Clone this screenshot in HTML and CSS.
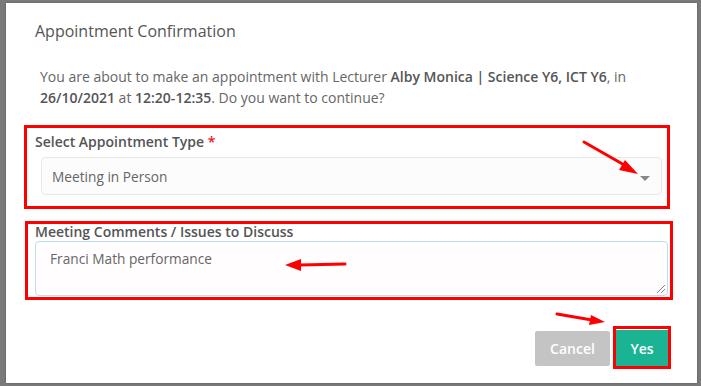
FILE: index.html
```html
<!DOCTYPE html>
<html lang="en">
<head>
    <meta charset="UTF-8">
    <meta name="viewport" content="width=device-width, initial-scale=1.0">
    <title>Appointment Confirmation</title>
    <link rel="stylesheet" href="styles.css">
</head>
<body>
    <div class="backdrop">
        <div class="modal">
            <h2 class="modal-title">Appointment Confirmation</h2>
            <p class="modal-text">You are about to make an appointment with Lecturer <strong>Alby Monica | Science Y6, ICT Y6</strong>, in <strong>26/10/2021</strong> at <strong>12:20-12:35</strong>. Do you want to continue?</p>

            <div class="mark mark-type">
                <label class="field-label">Select Appointment Type <span class="required">*</span></label>
                <div class="select-box">
                    <span>Meeting in Person</span>
                    <span class="caret"></span>
                </div>
            </div>

            <div class="mark mark-comments">
                <label class="field-label">Meeting Comments / Issues to Discuss</label>
                <div class="text-box">
                    <span>Franci Math performance</span>
                    <span class="grip"></span>
                </div>
            </div>

            <div class="modal-footer">
                <button class="btn btn-cancel">Cancel</button>
                <div class="mark-btn">
                    <button class="btn btn-yes">Yes</button>
                </div>
            </div>
        </div>
    </div>

    <svg class="arrows" width="701" height="386" viewBox="0 0 701 386">
        <line x1="584" y1="142" x2="626" y2="166" stroke="#ff0000" stroke-width="3" stroke-linecap="round"/>
        <polygon points="638,174 619,170 625,160" fill="#ff0000"/>
        <line x1="345" y1="264" x2="300" y2="265" stroke="#ff0000" stroke-width="3" stroke-linecap="round"/>
        <polygon points="285,265 301,259 301,271" fill="#ff0000"/>
        <line x1="557" y1="314" x2="592" y2="320" stroke="#ff0000" stroke-width="3" stroke-linecap="round"/>
        <polygon points="605,322 589,325 591,315" fill="#ff0000"/>
    </svg>
</body>
</html>
```

FILE: styles.css
```css
* {
    margin: 0;
    padding: 0;
    box-sizing: border-box;
}

body {
    font-family: 'Open Sans', 'Liberation Sans', sans-serif;
    background-color: #7a7a7a;
    width: 701px;
    height: 386px;
    overflow: hidden;
    position: relative;
}

.backdrop {
    padding: 3px 0 0 6px;
}

.modal {
    width: 691px;
    height: 380px;
    background-color: #ffffff;
    box-shadow: 0 0 2px rgba(0, 0, 0, 0.3);
}

.modal-title {
    padding: 18px 0 0 29px;
    font-size: 16px;
    line-height: 20px;
    font-weight: 400;
    color: #555555;
}

.modal-text {
    margin: 25px 0 0 34px;
    width: 625px;
    font-size: 14px;
    line-height: 21px;
    color: #666666;
}

.modal-text strong {
    font-weight: 600;
    color: #555555;
}

.mark {
    border: 3px solid #ff0000;
}

.mark-type {
    margin: 17px 0 0 18px;
    width: 646px;
    height: 84px;
    padding: 4px 0 0 8px;
}

.field-label {
    display: block;
    font-size: 14px;
    line-height: 20px;
    font-weight: 600;
    color: #555555;
}

.required {
    color: #e4202a;
}

.select-box {
    margin: 5px 0 0 6px;
    width: 621px;
    height: 38px;
    padding: 0 11px 0 10px;
    display: flex;
    align-items: center;
    justify-content: space-between;
    background-color: #fdfcfc;
    border: 1px solid #e9e7e7;
    border-radius: 4px;
    font-size: 13.7px;
    color: #666666;
}

.caret {
    width: 0;
    height: 0;
    margin-top: 4px;
    border-left: 5px solid transparent;
    border-right: 5px solid transparent;
    border-top: 5px solid #888888;
}

.mark-comments {
    margin: 12px 0 0 19px;
    width: 648px;
    height: 79px;
    padding: 0 0 0 7px;
}

.mark-comments .field-label {
    line-height: 16px;
}

.text-box {
    margin-top: 1px;
    width: 633px;
    height: 55px;
    padding: 7px 0 0 14px;
    position: relative;
    background-color: #fffdfd;
    border: 1px solid #bcdeef;
    border-radius: 4px;
    font-size: 13.7px;
    line-height: 20px;
    color: #666666;
}

.grip {
    position: absolute;
    right: 2px;
    bottom: 2px;
    width: 8px;
    height: 8px;
    background: linear-gradient(135deg, transparent 45%, #888 45%, #888 55%, transparent 55%, transparent 70%, #888 70%, #888 80%, transparent 80%);
}

.modal-footer {
    margin-top: 26px;
    padding-right: 26px;
    display: flex;
    justify-content: flex-end;
    align-items: center;
    gap: 3px;
}

.btn {
    border: none;
    font-family: inherit;
    font-size: 14px;
    color: #ffffff;
}

.btn-cancel {
    width: 75px;
    height: 35px;
    margin-top: 2px;
    background-color: #c4c4c4;
    border-radius: 2px;
    font-weight: 600;
}

.mark-btn {
    width: 58px;
    height: 43px;
    border: 3px solid #ff0000;
    padding: 1px 0 0 0;
    background-color: #ffffff;
}

.btn-yes {
    display: block;
    width: 100%;
    height: 36px;
    background-color: #1ab394;
    font-weight: 600;
}

.arrows {
    position: absolute;
    top: 0;
    left: 0;
}
```
